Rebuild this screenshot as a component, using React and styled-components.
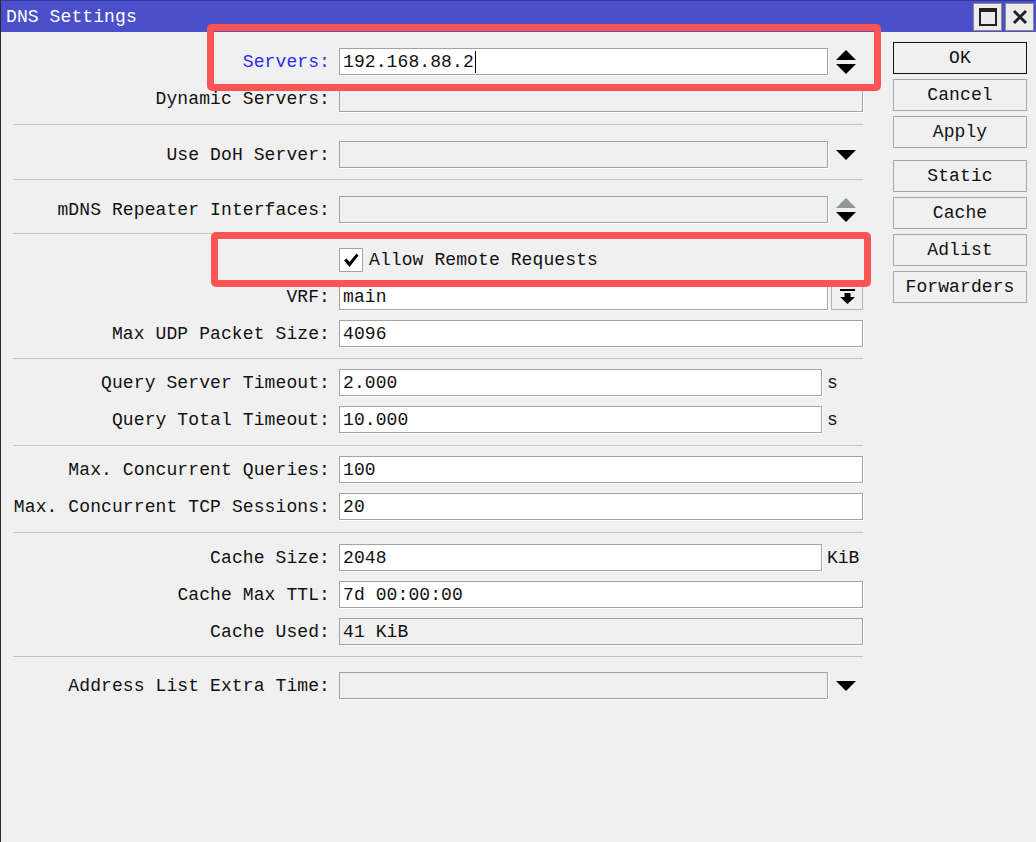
import React from 'react'
import styled, { createGlobalStyle } from 'styled-components'

const GlobalStyle = createGlobalStyle`
  html, body {
    margin: 0;
    padding: 0;
    background: #f0f0f0;
  }
  body {
    font-family: "Liberation Mono", "DejaVu Sans Mono", monospace;
    font-size: 18px;
    color: #111;
  }
  * { box-sizing: border-box; }
`

const Window = styled.div`
  position: relative;
  height: 100vh;
  display: flex;
  flex-direction: column;
  background: #f0f0f0;
  border-left: 1px solid #2a2a2a;
  overflow: hidden;
`

const TitleBar = styled.div`
  height: 32px;
  flex-shrink: 0;
  display: flex;
  align-items: center;
  background: #4b4fc9;
  border-top: 1px solid #34379a;
  padding-left: 5px;
  color: #fff;
  letter-spacing: 0.1px;
`

const TitleButtons = styled.div`
  margin-left: auto;
  display: flex;
  gap: 3px;
  padding-right: 2px;
`

const TitleButton = styled.div`
  width: 29px;
  height: 28px;
  display: flex;
  align-items: center;
  justify-content: center;
  background: #ececec;
  border: 1px solid #8a8a8a;
`

const Body = styled.div`
  display: flex;
  align-items: flex-start;
`

const Form = styled.div`
  width: 862px;
  display: flex;
  flex-direction: column;
`

const Group = styled.div`
  display: flex;
  flex-direction: column;
  gap: 10px;
  padding-top: ${p => p.$top}px;
  padding-bottom: ${p => p.$bottom}px;
`

const Separator = styled.div`
  height: 1px;
  margin-left: 12px;
  background: #c4c4c4;
`

const Row = styled.div`
  display: flex;
  align-items: center;
  height: 27px;
`

const Label = styled.div`
  width: 329px;
  flex-shrink: 0;
  text-align: right;
  white-space: nowrap;
  letter-spacing: 0.1px;
  color: ${p => (p.$active ? '#2b2bf0' : '#111')};
`

const Field = styled.div`
  margin-left: 9px;
  flex: 1;
  height: 100%;
  display: flex;
  align-items: stretch;
`

const Input = styled.div`
  flex: 1;
  display: flex;
  align-items: center;
  padding-left: 3px;
  border: 1px solid #a3a3a3;
  box-shadow: 1px 1px 0 #fff;
  background: ${p => (p.$disabled ? '#f0f0f0' : '#fff')};
  white-space: nowrap;
  letter-spacing: 0.1px;
`

const Caret = styled.span`
  display: inline-block;
  width: 1px;
  height: 22px;
  margin-left: 1px;
  background: #000;
`

const ArrowSlot = styled.div`
  width: 35px;
  flex-shrink: 0;
  display: flex;
  align-items: center;
  justify-content: center;
`

const DropButton = styled.div`
  width: 32px;
  margin-left: 3px;
  flex-shrink: 0;
  display: flex;
  align-items: center;
  justify-content: center;
  border: 1px solid #b4b4b4;
  background: #f0f0f0;
`

const Unit = styled.div`
  width: 41px;
  flex-shrink: 0;
  padding-left: 5px;
  display: flex;
  align-items: center;
`

const CheckRow = styled.label`
  display: flex;
  align-items: center;
  gap: 6px;
  letter-spacing: 0.1px;
`

const CheckBox = styled.span`
  width: 24px;
  height: 24px;
  display: flex;
  align-items: center;
  justify-content: center;
  background: #fff;
  border: 1px solid #a3a3a3;
`

const ButtonColumn = styled.div`
  width: 134px;
  margin-left: 30px;
  padding-top: 10px;
  display: flex;
  flex-direction: column;
  gap: 5px;
`

const Button = styled.div`
  height: 32px;
  display: flex;
  align-items: center;
  justify-content: center;
  background: #f0f0f0;
  border: 1px solid ${p => (p.$default ? '#111' : '#a8a8a8')};
  margin-top: ${p => (p.$spaced ? '7px' : '0')};
  letter-spacing: 0.1px;
`

const Highlight = styled.div`
  position: absolute;
  left: ${p => p.$x}px;
  top: ${p => p.$y}px;
  width: ${p => p.$w}px;
  height: ${p => p.$h}px;
  border: 7px solid #fb5454;
  border-radius: 5px;
  pointer-events: none;
`

const Triangle = ({ up, color = '#000' }) => (
  <svg width="20" height="10" viewBox="0 0 20 10">
    <polygon points={up ? '0,10 20,10 10,0' : '0,0 20,0 10,10'} fill={color} />
  </svg>
)

const Spinner = ({ upColor = '#000' }) => (
  <svg width="20" height="24" viewBox="0 0 20 24">
    <polygon points="0,10 20,10 10,0" fill={upColor} />
    <polygon points="0,14 20,14 10,24" fill="#000" />
  </svg>
)

const DownToBar = () => (
  <svg width="15" height="16" viewBox="0 0 15 16">
    <rect x="0" y="0" width="15" height="2" fill="#000" />
    <rect x="4.5" y="4" width="6" height="5" fill="#000" />
    <polygon points="0,8 15,8 7.5,15" fill="#000" />
  </svg>
)

const CheckMark = () => (
  <svg width="18" height="18" viewBox="0 0 18 18">
    <path d="M2 9.5 L4.5 7.5 L7.5 11 L14.5 2.5 L16.5 4.5 L7.5 16 Z" fill="#000" />
  </svg>
)

const MaximizeIcon = () => (
  <svg width="18" height="18" viewBox="0 0 18 18">
    <rect x="1" y="1" width="16" height="16" fill="none" stroke="#222" strokeWidth="2" />
    <rect x="1" y="1" width="16" height="3" fill="#222" />
  </svg>
)

const CloseIcon = () => (
  <svg width="16" height="16" viewBox="0 0 16 16">
    <path d="M2 2 L14 14 M14 2 L2 14" stroke="#222" strokeWidth="3" />
  </svg>
)

const TextRow = ({ label, value, disabled, active, unit, arrow, caret }) => (
  <Row>
    <Label $active={active}>{label}</Label>
    <Field>
      <Input $disabled={disabled}>
        {value}
        {caret && <Caret />}
      </Input>
      {arrow && <ArrowSlot>{arrow}</ArrowSlot>}
      {unit && <Unit>{unit}</Unit>}
    </Field>
  </Row>
)

export default function App() {
  return (
    <>
      <GlobalStyle />
      <Window>
        <TitleBar>
          DNS Settings
          <TitleButtons>
            <TitleButton><MaximizeIcon /></TitleButton>
            <TitleButton><CloseIcon /></TitleButton>
          </TitleButtons>
        </TitleBar>
        <Body>
          <Form>
            <Group $top={16} $bottom={12}>
              <TextRow label="Servers:" value="192.168.88.2" active caret arrow={<Spinner />} />
              <TextRow label="Dynamic Servers:" value="" disabled />
            </Group>
            <Separator />
            <Group $top={16} $bottom={11}>
              <TextRow label="Use DoH Server:" value="" disabled arrow={<Triangle />} />
            </Group>
            <Separator />
            <Group $top={16} $bottom={10}>
              <TextRow label="mDNS Repeater Interfaces:" value="" disabled arrow={<Spinner upColor="#8e9a94" />} />
            </Group>
            <Separator />
            <Group $top={12} $bottom={11}>
              <Row>
                <Label />
                <Field>
                  <CheckRow>
                    <CheckBox><CheckMark /></CheckBox>
                    Allow Remote Requests
                  </CheckRow>
                </Field>
              </Row>
              <Row>
                <Label>VRF:</Label>
                <Field>
                  <Input>main</Input>
                  <DropButton><DownToBar /></DropButton>
                </Field>
              </Row>
              <TextRow label="Max UDP Packet Size:" value="4096" />
            </Group>
            <Separator />
            <Group $top={10} $bottom={12}>
              <TextRow label="Query Server Timeout:" value="2.000" unit="s" />
              <TextRow label="Query Total Timeout:" value="10.000" unit="s" />
            </Group>
            <Separator />
            <Group $top={10} $bottom={12}>
              <TextRow label="Max. Concurrent Queries:" value="100" />
              <TextRow label="Max. Concurrent TCP Sessions:" value="20" />
            </Group>
            <Separator />
            <Group $top={11} $bottom={11}>
              <TextRow label="Cache Size:" value="2048" unit="KiB" />
              <TextRow label="Cache Max TTL:" value="7d 00:00:00" />
              <TextRow label="Cache Used:" value="41 KiB" disabled />
            </Group>
            <Separator />
            <Group $top={15} $bottom={0}>
              <TextRow label="Address List Extra Time:" value="" disabled arrow={<Triangle />} />
            </Group>
          </Form>
          <ButtonColumn>
            <Button $default>OK</Button>
            <Button>Cancel</Button>
            <Button>Apply</Button>
            <Button $spaced>Static</Button>
            <Button>Cache</Button>
            <Button>Adlist</Button>
            <Button>Forwarders</Button>
          </ButtonColumn>
        </Body>
        <Highlight $x={206} $y={24} $w={674} $h={67} />
        <Highlight $x={210} $y={232} $w={660} $h={55} />
      </Window>
    </>
  )
}
